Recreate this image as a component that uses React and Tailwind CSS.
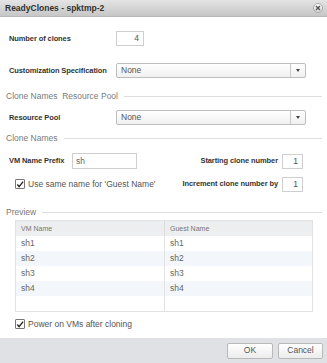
import React from "react";

const font = { fontFamily: '"Liberation Sans", Arial, sans-serif' };

function Caret() {
  return (
    <div className="w-[15px] h-full border-l border-[#c8c8c8] flex items-center justify-center">
      <div className="w-0 h-0 border-l-[2.5px] border-r-[2.5px] border-t-[3px] border-l-transparent border-r-transparent border-t-[#444]" />
    </div>
  );
}

function Dropdown() {
  return (
    <div className="w-[190px] h-[15px] border border-[#bdbdbd] rounded-[2px] bg-gradient-to-b from-white to-[#f0f0f0] flex items-center">
      <div className="flex-1 pl-[4px] text-[8.5px] text-[#555] leading-none">None</div>
      <Caret />
    </div>
  );
}

function Section({ children }) {
  return (
    <div className="flex items-center h-[12px] pl-[6px] pr-[5px]">
      <span className="text-[8.5px] text-[#7a7a7a] leading-none whitespace-nowrap">{children}</span>
      <div className="flex-1 h-px bg-[#dedede] ml-[6px]" />
    </div>
  );
}

function Check() {
  return (
    <div className="w-[10px] h-[10px] border border-[#777] bg-white flex items-center justify-center rounded-[1px]">
      <svg width="9" height="9" viewBox="0 0 9 9">
        <path d="M1.5 4.5 L3.5 7 L8 1.2" stroke="#222" strokeWidth="1.5" fill="none" />
      </svg>
    </div>
  );
}

function NumInput({ value, w = "w-[21px]" }) {
  return (
    <div className={`${w} h-[15px] border border-[#cfcfcf] bg-white text-[8.5px] text-[#555] flex items-center justify-end pr-[4px] leading-none`}>
      {value}
    </div>
  );
}

const label = "text-[7.5px] font-bold text-[#333] leading-none whitespace-nowrap tracking-[-0.1px]";

export default function App() {
  const rows = ["sh1", "sh2", "sh3", "sh4"];
  return (
    <div className="w-[327px] h-[363px] bg-white flex flex-col overflow-hidden" style={font}>
      {/* title bar */}
      <div className="h-[17px] bg-gradient-to-b from-[#e4e4e4] to-[#c6c6c6] flex items-center justify-between pl-[5px] pr-[4px] border-b border-[#b8b8b8]">
        <span className="text-[8.5px] font-semibold text-[#333] leading-none">ReadyClones - spktmp-2</span>
        <div className="w-[10px] h-[10px] rounded-full bg-gradient-to-b from-white to-[#d8d8d8] border border-[#aaa] flex items-center justify-center">
          <svg width="6" height="6" viewBox="0 0 6 6">
            <path d="M1 1 L5 5 M5 1 L1 5" stroke="#555" strokeWidth="1.4" />
          </svg>
        </div>
      </div>

      {/* body */}
      <div className="flex-1 flex flex-col">
        <div className="flex items-center pl-[9px] mt-[14px] h-[15px]">
          <span className={`w-[107px] ${label}`}>Number of clones</span>
          <NumInput value="4" w="w-[28px]" />
        </div>

        <div className="flex items-center pl-[9px] mt-[17px] h-[15px]">
          <span className={`w-[107px] ${label}`}>Customization Specification</span>
          <Dropdown />
        </div>

        <div className="mt-[12px]">
          <Section>Clone Names&nbsp;&nbsp;Resource Pool</Section>
        </div>

        <div className="flex items-center pl-[9px] mt-[8px] h-[15px]">
          <span className={`w-[107px] ${label}`}>Resource Pool</span>
          <Dropdown />
        </div>

        <div className="mt-[7px]">
          <Section>Clone Names</Section>
        </div>

        <div className="flex items-center pl-[9px] pr-[24px] mt-[9px] h-[16px]">
          <span className={`w-[63px] ${label}`}>VM Name Prefix</span>
          <div className="w-[65px] h-[16px] border border-[#cfcfcf] bg-white text-[8.5px] text-[#666] flex items-center pl-[3px] leading-none">sh</div>
          <div className="flex-1 flex items-center justify-end gap-[4px]">
            <span className={label}>Starting clone number</span>
            <NumInput value="1" />
          </div>
        </div>

        <div className="flex items-center pl-[15px] pr-[24px] mt-[7px] h-[16px]">
          <Check />
          <span className="ml-[3px] text-[8.5px] text-[#555] leading-none whitespace-nowrap">Use same name for 'Guest Name'</span>
          <div className="flex-1 flex items-center justify-end gap-[4px]">
            <span className={label}>Increment clone number by</span>
            <NumInput value="1" />
          </div>
        </div>

        <div className="mt-[14px]">
          <Section>Preview</Section>
        </div>

        {/* table */}
        <div className="ml-[15px] mr-[14px] mt-[2px] border border-[#e2e2e2] leading-none">
          <div className="grid grid-cols-[149px_1fr] h-[15px] bg-[#eceef0] text-[#777]">
            <div className="flex items-center pl-[5px] border-r border-[#dcdcdc] text-[7px]">VM Name</div>
            <div className="flex items-center pl-[5px] text-[7px]">Guest Name</div>
          </div>
          {rows.map((r, i) => (
            <div key={r} className={`grid grid-cols-[149px_1fr] h-[15px] text-[#666] text-[8.5px] ${i % 2 === 1 ? "bg-[#f3f6fa]" : "bg-white"}`}>
              <div className="flex items-center pl-[5px] border-r border-[#e2e2e2]">{r}</div>
              <div className="flex items-center pl-[5px]">{r}</div>
            </div>
          ))}
          <div className="grid grid-cols-[149px_1fr] h-[15px]">
            <div className="border-r border-[#e2e2e2]" />
            <div />
          </div>
        </div>

        <div className="flex items-center pl-[15px] mt-[6px] h-[12px]">
          <Check />
          <span className="ml-[3px] text-[8.5px] text-[#555] leading-none">Power on VMs after cloning</span>
        </div>
      </div>

      {/* footer */}
      <div className="h-[25px] bg-[#dfe1e4] flex items-center justify-end gap-[5px] pr-[4px]">
        <div className="w-[46px] h-[16px] rounded-[2px] border border-[#b9b9b9] bg-gradient-to-b from-white to-[#ececec] text-[8.5px] text-[#555] flex items-center justify-center leading-none">OK</div>
        <div className="w-[45px] h-[16px] rounded-[2px] border border-[#b9b9b9] bg-gradient-to-b from-white to-[#ececec] text-[8.5px] text-[#555] flex items-center justify-center leading-none">Cancel</div>
      </div>
    </div>
  );
}
